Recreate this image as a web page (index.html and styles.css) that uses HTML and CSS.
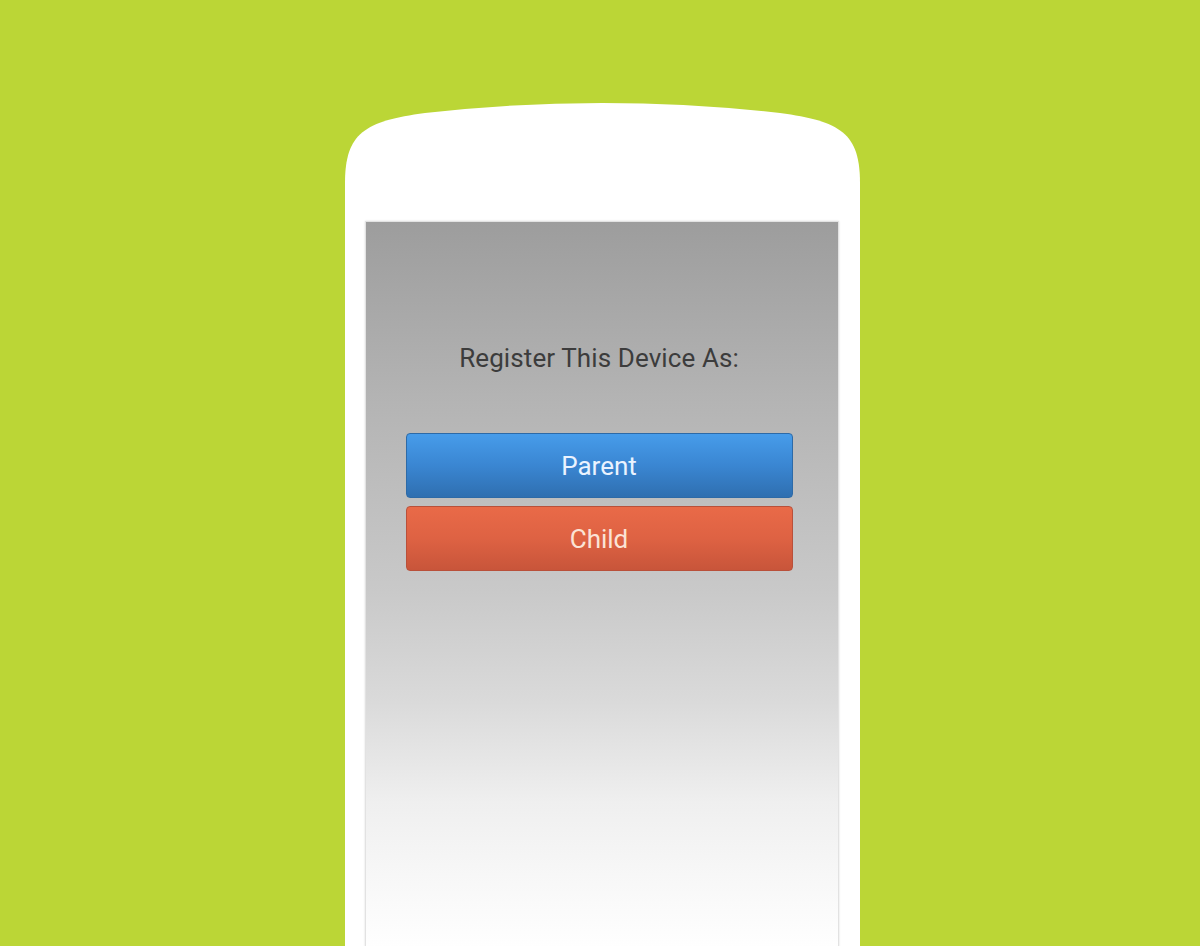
FILE: index.html
```html
<!DOCTYPE html>
<html>
<head>
<meta charset="utf-8">
<link rel="stylesheet" href="styles.css">
</head>
<body>
<div class="stage">
  <div class="phone">
    <div class="screen">
      <div class="title">Register This Device As:</div>
      <div class="buttons">
        <div class="btn btn-parent">Parent</div>
        <div class="btn btn-child">Child</div>
      </div>
    </div>
  </div>
</div>
</body>
</html>
```
FILE: styles.css
```css
html, body {
  margin: 0;
  padding: 0;
  width: 1200px;
  height: 946px;
  overflow: hidden;
  background: #bbd636;
  font-family: Roboto, "Liberation Sans", sans-serif;
}
.stage {
  width: 1200px;
  height: 946px;
  display: flex;
  justify-content: center;
  padding-top: 103px;
  box-sizing: border-box;
}
.phone {
  width: 515px;
  height: 843px;
  margin-left: 5px;
  background: #ffffff;
  clip-path: path("M0,843 V80 C0,30 20,18 80,10 Q257.5,-10 435,10 C495,18 515,30 515,80 V843 Z");
  box-sizing: border-box;
  padding: 119px 22px 0 21px;
  display: flex;
}
.screen {
  flex: 1;
  background: linear-gradient(to bottom, #9d9d9d 0px, #b4b4b4 180px, #c9c9c9 370px, #dadada 480px, #efefef 580px, #fafafa 680px, #ffffff 730px);
  box-shadow: 0 0 0 1px #e2e2e2, 0 0 2px 1px #dedede;
  display: flex;
  flex-direction: column;
  align-items: center;
  padding-right: 6px;
}
.title {
  margin-top: 121px;
  font-size: 26px;
  line-height: 30px;
  color: #3c3c3c;
  letter-spacing: 0.1px;
}
.buttons {
  margin-top: 60px;
  width: 387px;
  display: flex;
  flex-direction: column;
  gap: 8px;
}
.btn {
  height: 65px;
  box-sizing: border-box;
  border-radius: 4px;
  display: flex;
  align-items: center;
  justify-content: center;
  font-size: 26px;
}
.btn-parent {
  background: linear-gradient(to bottom, #479cea, #3a86d2 50%, #2f6fb0);
  border: 1px solid #2d6aa7;
  color: #eaf3ff;
}
.btn-child {
  background: linear-gradient(to bottom, #e96a48, #de6243 50%, #c8553a);
  border: 1px solid #b9503a;
  color: #fbe3d6;
}
```
